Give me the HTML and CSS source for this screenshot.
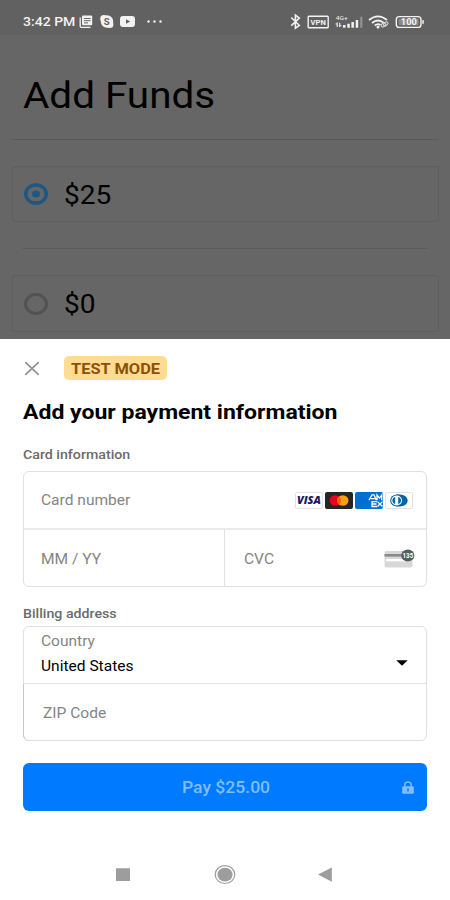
FILE: index.html
```html
<!DOCTYPE html>
<html lang="en">
<head>
<meta charset="utf-8">
<title>Add Funds</title>
<link rel="stylesheet" href="styles.css">
</head>
<body>
<div class="screen">
  <section class="backdrop">
    <header class="status">
      <span class="t clock">3:42 PM</span>
      <svg class="status-left" width="90" height="20" viewBox="0 0 90 20" fill="#f2f2f2">
        <path d="M1.200 6.500V15.300q0 1 1 1H11.500" fill="none" stroke="#f2f2f2" stroke-width="1.300"/>
        <rect x="3" y="4.500" width="10.200" height="9.800" rx="1"/>
        <path d="M5 7.500h6.500M5 9.700h6.500M5 11.900h4" stroke="#666" stroke-width="1"/>
        <circle cx="28" cy="10.500" r="6.200"/><circle cx="24.900" cy="7.700" r="3.700"/><circle cx="30.900" cy="13.500" r="3.500"/>
        <text x="24.800" y="13.900" font-size="9.500" font-weight="700" fill="#616161">S</text>
        <rect x="41" y="5" width="15" height="11" rx="3"/>
        <path d="M47 8.200v4.600l4.200-2.300z" fill="#616161"/>
        <circle cx="69.500" cy="10.500" r="1.200"/><circle cx="75.500" cy="10.500" r="1.200"/><circle cx="81.500" cy="10.500" r="1.200"/>
      </svg>
      <svg class="status-right" width="140" height="20" viewBox="0 0 140 20" fill="#f2f2f2">
        <path d="M1.300 6.500 9.300 14.300 5.400 17.200V4L9.300 7 1.300 14.700" fill="none" stroke="#f2f2f2" stroke-width="1.600"/>
        <rect x="18.200" y="5.200" width="20" height="11.600" rx=".8" fill="none" stroke="#f2f2f2" stroke-width="1.400"/>
        <text x="20.600" y="13.800" font-size="8" font-weight="700" textLength="15.300" lengthAdjust="spacingAndGlyphs">VPN</text>
        <text x="45.800" y="9" font-size="6" textLength="12" lengthAdjust="spacingAndGlyphs">4G+</text>
        <path d="M47.200 16v-4.500M45.600 13h1.600M49.700 11.800V16M49.700 14.600h1.600" stroke="#f2f2f2" stroke-width="1.100"/>
        <path d="M53 14h2.500v2.800H53zM57.300 12.700h2.500v4.100h-2.500zM61.400 11.100h2.500v5.700h-2.500zM65.700 9h2.500v7.800h-2.500z"/>
        <path d="M70.200 5.800h2.200v11h-2.200z" fill="#929292"/>
        <g fill="none" stroke="#f2f2f2" stroke-width="1.700"><path d="M79 9Q88 1.700 97 9"/><path d="M82 12Q88 7 94 12"/><path d="M84.700 14.500Q88 12 90.500 14"/></g>
        <circle cx="88" cy="16" r="1.500"/>
        <g fill="none" stroke="#d5d5d5" stroke-width="1.100"><rect x="90.900" y="12.600" width="5" height="3" rx="1.500" transform="rotate(-42 93 14)"/><rect x="93.300" y="11.300" width="5" height="3" rx="1.500" transform="rotate(-42 96 13)"/></g>
        <rect x="106.300" y="5.600" width="24.700" height="10.800" rx="3" fill="none" stroke="#f2f2f2" stroke-width="1.400"/>
        <rect x="108.600" y="7.800" width="20" height="6.500" rx="1" fill="#8a8a8a"/>
        <text x="110.800" y="14" font-size="8.300" font-weight="700" textLength="16" lengthAdjust="spacingAndGlyphs">100</text>
        <rect x="132.300" y="9" width="1.500" height="4" rx=".7"/>
      </svg>
    </header>
    <h1 class="page-title"><span class="t">Add Funds</span></h1>
    <hr class="rule">
    <div class="option">
      <svg width="24" height="22" viewBox="0 0 24 22"><ellipse cx="12" cy="11" rx="10.200" ry="9.100" fill="none" stroke="#1e5684" stroke-width="3.500"/><ellipse cx="12" cy="11" rx="4" ry="3.600" fill="#1e5684"/></svg>
      <span class="t amount">$25</span>
    </div>
    <hr class="rule inner">
    <div class="option second">
      <svg width="24" height="22" viewBox="0 0 24 22"><ellipse cx="12" cy="11" rx="10.500" ry="9.400" fill="none" stroke="#525252" stroke-width="3"/></svg>
      <span class="t amount">$0</span>
    </div>
  </section>

  <main class="sheet">
    <div class="sheet-top">
      <svg class="close" width="16" height="16" viewBox="0 0 16 16"><path d="M1.800 2.700 14.200 14.300M14.200 2.700 1.800 14.300" stroke="#949494" stroke-width="1.800" stroke-linecap="round"/></svg>
      <span class="badge"><span class="t">TEST MODE</span></span>
    </div>
    <h2 class="heading"><span class="t">Add your payment information</span></h2>
    <div class="label card-label"><span class="t">Card information</span></div>
    <div class="group">
      <div class="field number">
        <span class="t">Card number</span>
        <div class="brands">
          <svg width="28" height="17" viewBox="0 0 28 17"><rect x=".5" y=".5" width="27" height="16" rx="1.500" fill="#fff" stroke="#e2e2e2"/><text x="2" y="12.200" font-family="Open Sans" font-size="10" font-weight="800" font-style="italic" fill="#171c61" textLength="24" lengthAdjust="spacingAndGlyphs">VISA</text></svg>
          <svg width="28" height="17" viewBox="0 0 28 17"><rect width="28" height="17" rx="2" fill="#252525"/><ellipse cx="10.300" cy="8.500" rx="5.700" ry="5.200" fill="#eb001b"/><ellipse cx="17.800" cy="8.500" rx="5.700" ry="5.200" fill="#f79e1b"/><path d="M14.050 4.600a5.700 5.200 0 0 1 0 7.800a5.700 5.200 0 0 1 0-7.800" fill="#ff5f00"/></svg>
          <svg width="28" height="17" viewBox="0 0 28 17"><rect width="28" height="17" rx="2" fill="#016fd0"/><path d="M14 8.300 17 2.800h2l2.300 5.500M15.800 6.700h4M22 8.300V2.900l2.400 3.200 2.400-3.200v5.400M22 9.600h-5v4.900h5M17 12h4.500M22.500 9.600l5 4.900M27.500 9.600l-5 4.900" fill="none" stroke="#fff" stroke-width="1.300"/></svg>
          <svg width="28" height="17" viewBox="0 0 28 17"><rect x=".5" y=".5" width="27" height="16" rx="1.500" fill="#fff" stroke="#e2e2e2"/><path d="M11.500 2.500H15a7.700 6 0 0 1 0 12H11.500z" fill="#0165ac"/><ellipse cx="11.700" cy="8.500" rx="6.500" ry="6" fill="#0165ac"/><ellipse cx="11.700" cy="8.500" rx="5.400" ry="5" fill="#fff"/><path d="M10.200 5v7a3.700 3.600 0 0 1 0-7M13.200 5v7a3.700 3.600 0 0 0 0-7" fill="#0165ac"/></svg>
        </div>
      </div>
      <div class="split">
        <div class="field expiry"><span class="t">MM / YY</span></div>
        <div class="field cvc"><span class="t">CVC</span>
          <svg width="32" height="20" viewBox="0 0 32 20"><rect x=".5" y="2" width="28" height="16.500" rx="2" fill="#d8d8d8"/><rect x=".5" y="5" width="28" height="2.600" fill="#8a8a8a"/><rect x="2" y="10" width="25" height="2.300" rx=".5" fill="#fff"/><ellipse cx="23.800" cy="6.500" rx="6.600" ry="6.100" fill="#5a5a5a"/><text x="18.500" y="9.300" font-size="7.600" font-weight="700" fill="#fff" textLength="10.800" lengthAdjust="spacingAndGlyphs">135</text></svg>
        </div>
      </div>
    </div>
    <div class="label bill-label"><span class="t">Billing address</span></div>
    <div class="group billing">
      <div class="field country">
        <div class="country-text"><span class="t">Country</span><span class="t value">United States</span></div>
        <svg width="12" height="6" viewBox="0 0 12 6"><path d="M.3.300h11.400L6 5.800z" fill="#000"/></svg>
      </div>
      <div class="field zip"><span class="t">ZIP Code</span></div>
    </div>
    <button class="pay"><span class="t">Pay $25.00</span>
      <svg width="12" height="13" viewBox="0 0 12 13"><path d="M2.800 6V4a3.200 3 0 0 1 6.400 0v2" fill="none" stroke="#80bdff" stroke-width="1.400"/><rect x=".2" y="5.300" width="11.600" height="7.500" rx="1.300" fill="#80bdff"/><path d="M6 7.500v3" stroke="#007aff" stroke-width="1.400"/></svg>
    </button>
    <nav class="nav">
      <svg width="14" height="20" viewBox="0 0 14 20"><rect y="3.200" width="14" height="12.800" rx=".4" fill="#9d9d9d"/></svg>
      <svg width="22" height="20" viewBox="0 0 22 20"><ellipse cx="11" cy="9.600" rx="9.800" ry="8.900" fill="none" stroke="#9d9d9d" stroke-width="1.200"/><ellipse cx="11" cy="9.600" rx="7.600" ry="6.900" fill="#9d9d9d"/></svg>
      <svg width="14" height="20" viewBox="0 0 14 20"><path d="M0 9.600 13.800 2.500V16.700z" fill="#9d9d9d"/></svg>
    </nav>
  </main>
</div>
</body>
</html>
```
FILE: styles.css
```css
* { box-sizing: border-box; }
body { margin: 0; font-family: Roboto, "Liberation Sans", sans-serif; background: #fff; }
svg { display: block; flex: none; font-family: Roboto, sans-serif; }
.screen { width: 450px; height: 900px; overflow: hidden; }
/* Wide glyph proportions, anchored at the left edge. */
.t { display: inline-block; white-space: nowrap; transform: scaleX(1.107); transform-origin: left center; }

.backdrop { height: 339px; background: #666; overflow: hidden; }
.status { height: 35px; padding: 8px 0 0 23px; background: #616161; display: flex; align-items: flex-start; color: #f2f2f2; }
.clock { width: 56px; font-size: 13px; line-height: 27px; font-weight: 500; transform: scaleX(1.08); }
.status-left { margin-top: 3px; }
.status-right { margin: 3px 0 0 120.500px; }
.page-title { margin: 37px 0 0 23px; height: 48px; font-size: 36.500px; line-height: 48px; font-weight: 400; color: #000; }
.rule { margin: 19px 11px 0 12px; border: 0; height: 1px; background: #5a5a5a; }
.option { margin: 26px 11px 0 12px; height: 56px; border: 1px solid #5f5f5f; border-radius: 3px; display: flex; align-items: center; padding-left: 11px; gap: 16px; }
.option.second { height: 57px; }
.amount { font-size: 25.500px; line-height: 32px; color: #000; margin-top: 1px; transform: scaleX(1.1); }
.rule.inner { margin: 26px 23px 0; }

.sheet { height: 561px; padding: 17px 23px 0; background: #fff; }
.sheet-top { display: flex; align-items: center; height: 24px; padding-left: 1px; gap: 24px; }
.badge { width: 103px; height: 24px; padding-left: 7px; border-radius: 5px; background: #ffdc91; color: #8c520a; font-size: 14.700px; line-height: 26px; font-weight: 700; }
.heading { margin: 20px 0 0; font-size: 20px; line-height: 24px; font-weight: 700; color: #000; }
.heading .t { transform: scaleX(1.15); }
.badge .t { transform: scaleX(1.12); }
.label { font-size: 13.400px; line-height: 16px; font-weight: 500; color: #6b6b6b; }
.label .t { transform: scaleX(1.06); }
.card-label { margin-top: 23px; }
.bill-label { margin-top: 19px; }
.group { margin-top: 8px; height: 116px; border: 1px solid #e0e0e0; border-radius: 6px; }
.field { display: flex; align-items: center; justify-content: space-between; padding-left: 17px; color: #858585; font-size: 14.700px; line-height: 20px; }
.field .t { transform: scaleX(1.058); }
.number { height: 58px; padding-right: 13px; border-bottom: 2px solid #ebebeb; }
.brands { display: flex; gap: 2px; }
.split { display: grid; grid-template-columns: 200px 1fr; height: 57px; }
.cvc { border-left: 1px solid #e0e0e0; padding-left: 19px; padding-right: 10px; }
.billing { margin-top: 4px; height: 115px; }
.country { height: 57px; padding-right: 18px; border-bottom: 1px solid #e3e3e3; }
.country-text { display: flex; flex-direction: column; gap: 5px; margin-top: -4px; }
.value { color: #000; }
.country svg { margin-top: 15px; }
.zip { height: 57px; margin-left: -1px; padding-left: 18.500px; border-left: 1px solid #c8c8c8; border-radius: 0 0 0 6px; padding-top: 1px; }
.pay { margin: 22px 0 0; width: 100%; height: 48px; border: 0; border-radius: 6px; background: #007aff; color: #80bdff; font-family: inherit; font-size: 15.800px; font-weight: 500; display: flex; align-items: center; justify-content: space-between; padding: 0 13px 0 158.500px; }
.pay .t { margin-top: 1px; transform: scaleX(1.11); }
.nav { margin-top: 54px; display: flex; align-items: center; justify-content: space-between; padding: 0 95px 0 93px; }
.nav svg:nth-child(2) { margin-left: 2px; }
```
